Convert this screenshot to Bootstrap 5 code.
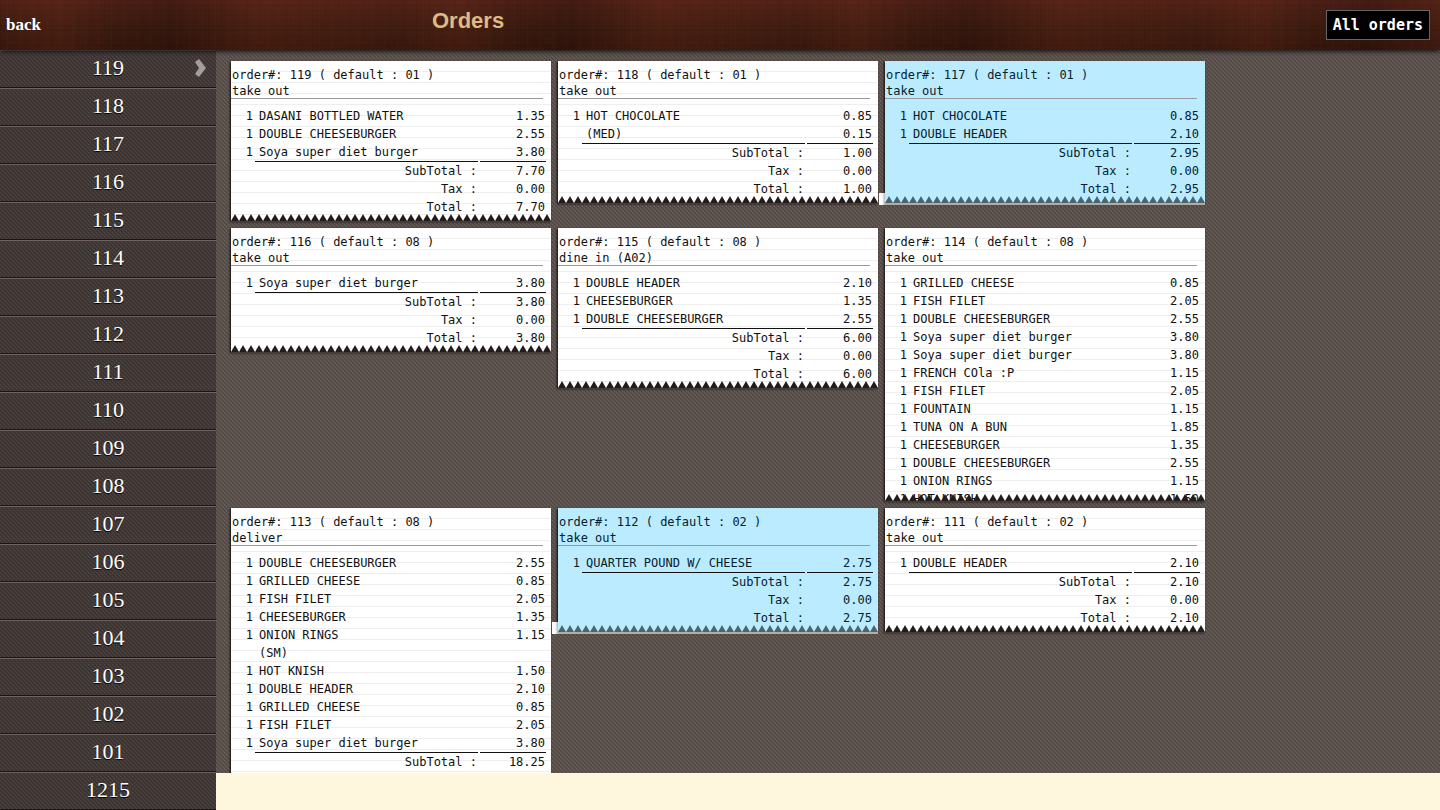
<!DOCTYPE html>
<html lang="en">
<head>
<meta charset="utf-8">
<meta name="viewport" content="width=device-width, initial-scale=1">
<title>Orders</title>
<link href="https://cdn.jsdelivr.net/npm/bootstrap@5.3.0/dist/css/bootstrap.min.css" rel="stylesheet">
<style>
  body { background: #fff7dd; }
  .topbar {
    height: 50px; z-index: 5; box-shadow: 0 1px 5px rgba(0,0,0,.9);
    background:
      repeating-linear-gradient(rgba(0,0,0,.07) 0 1px, transparent 1px 5px),
      repeating-linear-gradient(90deg, rgba(0,0,0,.06) 0 1px, transparent 1px 7px, rgba(110,50,30,.1) 7px 8px, transparent 8px 13px),
      repeating-linear-gradient(90deg, rgba(0,0,0,.04) 0, rgba(110,45,25,.15) 60px, rgba(0,0,0,.1) 110px, rgba(0,0,0,.2) 170px, rgba(110,45,25,.15) 260px, rgba(0,0,0,.04) 400px),
      linear-gradient(#572318, #4a2014 30%, #421d11 60%, #3a180e);
  }
  .back-link { font: bold 17px/24px "Liberation Serif", serif; color: #fff; text-decoration: none; padding-left: 6px; width: 30%; }
  .page-title { font: bold 22px/26px "Liberation Sans", sans-serif; color: #deba87; margin: 0 0 8px; }
  .btn-all {
    font: bold 15px/18px "DejaVu Sans Mono", monospace; color: #fff; background: #000;
    border: 1px solid #666; border-radius: 0; padding: 5px 6px; margin-right: 10px;
  }
  .side { flex: 0 0 15%; background-color: #443a37; }
  .side a {
    height: 38px; font: 22px/34px "Liberation Serif", serif; color: #fff; text-decoration: none;
    text-shadow: 0 1px 1px #000; border-top: 1px solid #6f6461; border-bottom: 1px solid #1b1413;
  }
  .chevron { right: 10px; top: 8px; }
  .page { height: calc(100vh - 50px); }
  .weave {
    background-image: url("data:image/svg+xml,%3Csvg xmlns='http://www.w3.org/2000/svg' width='4' height='4' shape-rendering='crispEdges'%3E%3Cpath fill='%23000' fill-opacity='.2' d='M0 0h1v1H0zM1 1h1v1H1zM2 2h1v1H2zM3 3h1v1H3z'/%3E%3Cpath fill='%23fff' fill-opacity='.07' d='M2 0h1v1H2zM0 2h1v1H0z'/%3E%3C/svg%3E");
  }
  .board { background-color: #5f544f; margin-bottom: 37px; padding: 11px 15px 0; }
  .ticket-grid { gap: 7px; }
  .ticket-wrap { width: 320px; box-shadow: -1px 1px 2px rgba(0,0,0,.85); }
  .ticket {
    max-height: 273px; color: #111; padding: 6px 0 5px;
    font: 12px/16px "DejaVu Sans Mono", monospace;
    background: repeating-linear-gradient(#fff 0 10px, #eee 10px 11px);
  }
  .ticket header { width: 312px; height: 32px; border-bottom: 1px solid #999; margin-bottom: 8px; padding-left: 1px; }
  .ticket table { width: 317px; table-layout: fixed; border-collapse: separate; border-spacing: 2px 0; line-height: 18px; }
  .ticket td, .ticket th { padding: 0; font-weight: 400; white-space: pre; height: 18px; vertical-align: top; }
  .c-qty { width: 20px; }
  .c-sum { width: 66px; }
  .ticket .item { padding-left: 4px; }
  .ticket .amt, .ticket tfoot th { padding-right: 1px; }
  .ticket tbody tr:last-child .item, .ticket tbody tr:last-child .amt { border-bottom: 1px solid #111; height: 19px; }
  .tear {
    height: 8px; bottom: -1px;
    background: url("data:image/svg+xml,%3Csvg xmlns='http://www.w3.org/2000/svg' width='8' height='8'%3E%3Cpath fill='%23231c1b' d='M0 7L4 0L8 7z'/%3E%3Cpath fill='%23453b38' d='M0 7h8v1H0z'/%3E%3C/svg%3E") repeat-x;
  }
  .picked .ticket { background: #bbebff; color: #04222e; }
  .picked .tear {
    height: 9px; bottom: -2px;
    background-image: url("data:image/svg+xml,%3Csvg xmlns='http://www.w3.org/2000/svg' width='8' height='9'%3E%3Cpath fill='%234a656f' d='M0 7L4 0L8 7z'/%3E%3Cpath fill='%23b5aca6' d='M0 7h8v2H0z'/%3E%3C/svg%3E");
  }
  .picked::before { content: ""; position: absolute; left: -6px; bottom: -2px; width: 6px; height: 12px; background: linear-gradient(90deg, #fff 50%, #bbb5b0); }
</style>
</head>
<body class="overflow-hidden">
<nav class="topbar position-relative d-flex align-items-center">
  <a class="back-link" href="#">back</a>
  <h1 class="page-title">Orders</h1>
  <button type="button" class="btn btn-all ms-auto">All orders</button>
</nav>
<div class="page d-flex">
  <nav class="side weave overflow-hidden" id="orderList" aria-label="Orders"></nav>
  <main class="board weave flex-grow-1 overflow-hidden">
    <div class="ticket-grid d-flex flex-wrap align-items-start" id="tickets"></div>
  </main>
</div>
<script src="https://cdn.jsdelivr.net/npm/bootstrap@5.3.0/dist/js/bootstrap.bundle.min.js"></script>
<script>
  const numbers = [119, 118, 117, 116, 115, 114, 113, 112, 111, 110, 109, 108, 107, 106, 105, 104, 103, 102, 101, 1215];
  const chevron = '<svg class="chevron position-absolute" width="12" height="18" viewBox="0 0 12 18" aria-hidden="true"><path d="M1 3L5 0L12 9L5 18L1 15L5 9z" fill="#a59d9b"/></svg>';
  document.getElementById('orderList').innerHTML = numbers.map((n, i) =>
    `<a class="d-block text-center position-relative" href="#order-${n}">${n}${i ? '' : chevron}</a>`).join('');

  // item: [quantity, name, price]
  const soya = [1, 'Soya super diet burger', '3.80'];
  const double = [1, 'DOUBLE CHEESEBURGER', '2.55'];
  const cheese = [1, 'CHEESEBURGER', '1.35'];
  const header = [1, 'DOUBLE HEADER', '2.10'];
  const fish = [1, 'FISH FILET', '2.05'];
  const grilled = [1, 'GRILLED CHEESE', '0.85'];
  const knish = [1, 'HOT KNISH', '1.50'];
  const rings = [1, 'ONION RINGS', '1.15'];
  const cocoa = [1, 'HOT CHOCOLATE', '0.85'];
  const sums = total => [['SubTotal', total], ['Tax', '0.00'], ['Total', total]];
  const orders = [
    { no: 119, by: '01', type: 'take out', sums: sums('7.70'), items: [[1, 'DASANI BOTTLED WATER', '1.35'], double, soya] },
    { no: 118, by: '01', type: 'take out', sums: sums('1.00'), items: [cocoa, ['', '(MED)', '0.15']] },
    { no: 117, by: '01', type: 'take out', sums: sums('2.95'), picked: true, items: [cocoa, header] },
    { no: 116, by: '08', type: 'take out', sums: sums('3.80'), items: [soya] },
    { no: 115, by: '08', type: 'dine in (A02)', sums: sums('6.00'), items: [header, cheese, double] },
    { no: 114, by: '08', type: 'take out', sums: [], items: [grilled, fish, double, soya, soya, [1, 'FRENCH COla :P', '1.15'], fish,
      [1, 'FOUNTAIN', '1.15'], [1, 'TUNA ON A BUN', '1.85'], cheese, double, rings, knish] },
    { no: 113, by: '08', type: 'deliver', sums: [['SubTotal', '18.25']], items: [double, grilled, fish, cheese, rings, ['', '(SM)', ''], knish, header, grilled, fish, soya] },
    { no: 112, by: '02', type: 'take out', sums: sums('2.75'), picked: true, items: [[1, 'QUARTER POUND W/ CHEESE', '2.75']] },
    { no: 111, by: '02', type: 'take out', sums: sums('2.10'), items: [header] }
  ];
  document.getElementById('tickets').innerHTML = orders.map(o => `
    <article class="ticket-wrap position-relative${o.picked ? ' picked' : ''}" id="order-${o.no}">
      <div class="ticket overflow-hidden">
        <header>order#: ${o.no} ( default : ${o.by} )<br>${o.type}</header>
        <table>
          <colgroup><col class="c-qty"><col><col class="c-sum"></colgroup>
          <tbody>${o.items.map(([q, name, price]) =>
            `<tr><td class="text-end">${q}</td><td class="item">${name}</td><td class="amt text-end">${price}</td></tr>`).join('')}</tbody>
          <tfoot>${o.sums.map(([label, value]) =>
            `<tr><th colspan="2" scope="row" class="text-end">${label} :</th><td class="amt text-end">${value}</td></tr>`).join('')}</tfoot>
        </table>
      </div>
      ${o.no === 113 ? '' : '<div class="tear position-absolute start-0 w-100"></div>'}
    </article>`).join('');
</script>
</body>
</html>
